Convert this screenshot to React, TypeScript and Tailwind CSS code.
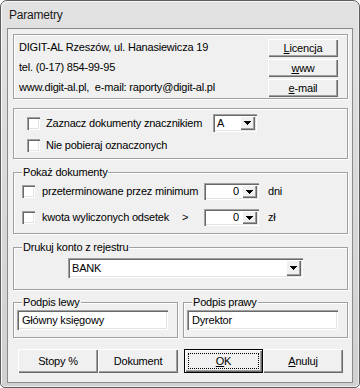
import React from "react";

const raised =
  "bg-[#f0f0f0] shadow-[inset_1px_1px_0_#ffffff,inset_-1px_-1px_0_#696969,inset_-2px_-2px_0_#a0a0a0]";
const sunken =
  "bg-white shadow-[inset_1px_1px_0_#a0a0a0,inset_2px_2px_0_#696969,inset_-1px_-1px_0_#ffffff,inset_-2px_-2px_0_#e3e3e3]";
const etched =
  "border border-[#a0a0a0] shadow-[inset_1px_1px_0_#ffffff,1px_1px_0_#ffffff]";

function DropArrow() {
  return (
    <div
      className={`w-[15px] my-[2px] mr-[2px] flex items-center justify-center ${raised}`}
    >
      <svg width="7" height="4" viewBox="0 0 7 4" shapeRendering="crispEdges">
        <path d="M0 0H7L3.5 4Z" fill="#000" />
      </svg>
    </div>
  );
}

function Checkbox() {
  return <div className={`w-[13px] h-[13px] shrink-0 ${sunken}`} />;
}

function Button({
  children,
  className,
}: {
  children: React.ReactNode;
  className: string;
}) {
  return (
    <div
      className={`flex items-center justify-center text-[11px] leading-[13px] ${raised} ${className}`}
    >
      {children}
    </div>
  );
}

export default function App() {
  return (
    <div className="w-[360px] h-[388px] bg-white">
      <div className="w-[360px] h-[388px] flex flex-col rounded-t-[7px] rounded-b-[5px] border border-[#5b5f64] bg-gradient-to-b from-[#e2e2e2] to-[#d0d0d0] shadow-[inset_1px_1px_0_#f7f7f7,inset_-1px_-1px_0_#ececec] font-['Liberation_Sans',Arial,sans-serif] text-black tracking-[-0.2px]">
        {/* title bar */}
        <div className="h-[27px] pl-[8px] pt-[7px] text-[12px] leading-[14px] text-[#1a1a1a]">
          Parametry
        </div>

        {/* client area */}
        <div className="mx-[6px] h-[355px] border border-[#8a8a8a] bg-[#f0f0f0] pl-[5px] flex flex-col">
          {/* firm info */}
          <div className={`mt-[5px] w-[335px] h-[65px] flex ${etched}`}>
            <div className="flex-1 pl-[5px] pt-[2px] flex flex-col text-[11px] leading-[20px]">
              <div className="h-[20px]">DIGIT-AL Rzeszów, ul. Hanasiewicza 19</div>
              <div className="h-[20px]">tel. (0-17) 854-99-95</div>
              <div className="h-[20px]">
                www.digit-al.pl,&nbsp; e-mail: raporty@digit-al.pl
              </div>
            </div>
            <div className="pt-[4px] pr-[9px] flex flex-col gap-[2px]">
              <Button className="w-[70px] h-[18px]">
                <span className="underline">L</span>icencja
              </Button>
              <Button className="w-[70px] h-[18px]">
                <span className="underline">w</span>ww
              </Button>
              <Button className="w-[70px] h-[18px]">
                <span className="underline">e</span>-mail
              </Button>
            </div>
          </div>

          {/* marking */}
          <div
            className={`mt-[9px] w-[335px] h-[51px] pl-[13px] pt-[5px] flex flex-col text-[11px] leading-[13px] ${etched}`}
          >
            <div className="h-[18px] flex items-center">
              <Checkbox />
              <span className="ml-[6px] w-[167px]">
                Zaznacz dokumenty znacznikiem
              </span>
              <div className={`w-[44px] h-[18px] flex ${sunken}`}>
                <span className="flex-1 pl-[4px] self-center">A</span>
                <DropArrow />
              </div>
            </div>
            <div className="mt-[7px] h-[13px] flex items-center">
              <Checkbox />
              <span className="ml-[6px]">Nie pobieraj oznaczonych</span>
            </div>
          </div>

          {/* Pokaż dokumenty */}
          <div
            className={`relative mt-[13px] w-[335px] h-[62px] pl-[8px] pt-[10px] flex flex-col gap-[9px] text-[11px] leading-[13px] ${etched}`}
          >
            <span className="absolute -top-[7px] left-[8px] px-[1px] bg-[#f0f0f0]">
              Pokaż dokumenty
            </span>
            <div className="h-[17px] flex items-center">
              <Checkbox />
              <span className="ml-[7px] w-[162px]">
                przeterminowane przez minimum
              </span>
              <div className={`w-[55px] h-[17px] flex ${sunken}`}>
                <span className="flex-1 pr-[3px] text-right self-center">0</span>
                <DropArrow />
              </div>
              <span className="ml-[9px]">dni</span>
            </div>
            <div className="h-[17px] flex items-center">
              <Checkbox />
              <span className="ml-[7px] w-[140px]">kwota wyliczonych odsetek</span>
              <span className="w-[22px]">&gt;</span>
              <div className={`w-[55px] h-[17px] flex ${sunken}`}>
                <span className="flex-1 pr-[3px] text-right self-center">0</span>
                <DropArrow />
              </div>
              <span className="ml-[9px]">zł</span>
            </div>
          </div>

          {/* Drukuj konto */}
          <div
            className={`relative mt-[13px] w-[335px] h-[43px] pl-[54px] pt-[10px] text-[11px] leading-[13px] ${etched}`}
          >
            <span className="absolute -top-[7px] left-[8px] px-[1px] bg-[#f0f0f0]">
              Drukuj konto z rejestru
            </span>
            <div className={`w-[235px] h-[20px] flex ${sunken}`}>
              <span className="flex-1 pl-[4px] self-center">BANK</span>
              <DropArrow />
            </div>
          </div>

          {/* signatures */}
          <div className="mt-[12px] flex gap-[5px] text-[11px] leading-[13px]">
            <div className={`relative w-[165px] h-[36px] pl-[3px] pt-[7px] ${etched}`}>
              <span className="absolute -top-[7px] left-[8px] px-[1px] bg-[#f0f0f0]">
                Podpis lewy
              </span>
              <div className={`w-[151px] h-[20px] pl-[5px] flex items-center ${sunken}`}>
                Główny księgowy
              </div>
            </div>
            <div className={`relative w-[165px] h-[36px] pl-[3px] pt-[7px] ${etched}`}>
              <span className="absolute -top-[7px] left-[8px] px-[1px] bg-[#f0f0f0]">
                Podpis prawy
              </span>
              <div className={`w-[151px] h-[20px] pl-[5px] flex items-center ${sunken}`}>
                Dyrektor
              </div>
            </div>
          </div>

          {/* bottom buttons */}
          <div className="mt-[11px] pl-[5px] flex">
            <Button className="w-[80px] h-[24px]">Stopy %</Button>
            <Button className="w-[80px] h-[24px]">Dokument</Button>
            <div className="ml-[6px] w-[79px] h-[24px] border border-black">
              <div className={`w-full h-full p-[3px] ${raised}`}>
                <div className="w-full h-full border border-dotted border-black flex items-center justify-center text-[11px] leading-[13px]">
                  <span className="underline">O</span>K
                </div>
              </div>
            </div>
            <Button className="w-[80px] h-[24px]">
              <span className="underline">A</span>nuluj
            </Button>
          </div>
        </div>
      </div>
    </div>
  );
}
